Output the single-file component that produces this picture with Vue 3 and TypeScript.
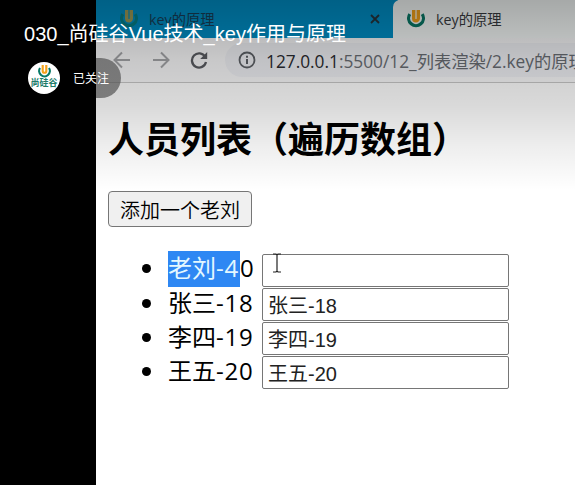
<script setup lang="ts">
import { ref } from 'vue'

interface Person {
  id: string
  name: string
  selected: string
  rest: string
  input: string
}

const people = ref<Person[]>([
  { id: '004', name: '老刘', selected: '-4', rest: '0', input: '' },
  { id: '001', name: '张三', selected: '', rest: '-18', input: '张三-18' },
  { id: '002', name: '李四', selected: '', rest: '-19', input: '李四-19' },
  { id: '003', name: '王五', selected: '', rest: '-20', input: '王五-20' },
])
</script>

<template>
  <div class="player">
    <div class="video">
      <div class="tabs">
        <div class="tab inactive">
          <svg class="favicon" viewBox="0 0 18 18">
            <path d="M2.8 4.2A7.4 7.4 0 1 0 15.2 4.2" fill="none" stroke="#087a68" stroke-width="3.2" />
            <path d="M6.7 0v8.4a2.3 2.3 0 0 0 4.6 0V0" fill="none" stroke="#f5a31c" stroke-width="3.4" />
          </svg>
          <span class="tab-title">key的原理</span>
          <svg class="close" viewBox="0 0 10 10"><path d="M1 1l8 8M9 1L1 9" stroke="#26343c" stroke-width="1.8" /></svg>
        </div>
        <div class="tab active">
          <svg class="favicon" viewBox="0 0 18 18">
            <path d="M2.8 4.2A7.4 7.4 0 1 0 15.2 4.2" fill="none" stroke="#087a68" stroke-width="3.2" />
            <path d="M6.7 0v8.4a2.3 2.3 0 0 0 4.6 0V0" fill="none" stroke="#f5a31c" stroke-width="3.4" />
          </svg>
          <span class="tab-title">key的原理</span>
        </div>
      </div>
      <div class="toolbar">
        <svg class="nav" viewBox="0 0 18 18"><path d="M17 9H2M9 1.5L1.5 9 9 16.5" fill="none" stroke="#a5a6a9" stroke-width="2" /></svg>
        <svg class="nav" viewBox="0 0 18 18"><path d="M1 9h15M9 1.5L16.5 9 9 16.5" fill="none" stroke="#a5a6a9" stroke-width="2" /></svg>
        <svg class="nav reload" viewBox="0 0 18 18">
          <path d="M15.2 5.8A7.1 7.1 0 1 0 16 11" fill="none" stroke="#5b5d62" stroke-width="2.3" />
          <path d="M17.2 1v7h-7z" fill="#5b5d62" />
        </svg>
        <div class="address">
          <svg class="info" viewBox="0 0 18 18">
            <circle cx="9" cy="9" r="7.5" fill="none" stroke="#5f6368" stroke-width="1.8" />
            <path d="M9 8v5M9 4.8v2" stroke="#5f6368" stroke-width="2" />
          </svg>
          <span class="url"><b>127.0.0.1</b><span class="port">:5500/12_</span><span class="path">列表渲染/2.key的原理</span></span>
        </div>
      </div>
      <main class="page">
        <h2>人员列表（遍历数组）</h2>
        <button type="button">添加一个老刘</button>
        <ul>
          <li v-for="p in people" :key="p.id">
            <span class="label"><span :class="{ marked: p.selected }">{{ p.name }}<span v-if="p.selected" class="num">{{ p.selected }}</span></span><span class="num">{{ p.rest }}</span></span>
            <input v-model="p.input" type="text" />
          </li>
        </ul>
      </main>
      <svg class="caret" viewBox="0 0 10 20"><path d="M1 1h3l1 1 1-1h3M5 2v16M1 19h3l1-1 1 1h3" fill="none" stroke="#222" stroke-width="1.2" /></svg>
    </div>
    <div class="shade"></div>
    <header class="overlay">
      <div class="title">030_尚硅谷Vue技术_key作用与原理</div>
      <div class="follow">
        <div class="avatar">
          <svg class="avatar-logo" viewBox="0 0 18 18">
            <path d="M2.8 4.2A7.4 7.4 0 1 0 15.2 4.2" fill="none" stroke="#087a68" stroke-width="3" />
            <path d="M6.5 0v8.2a2.5 2.5 0 0 0 5 0V0" fill="none" stroke="#f5a31c" stroke-width="3" />
          </svg>
          <span class="brand">尚硅谷</span>
        </div>
        <span>已关注</span>
      </div>
    </header>
  </div>
</template>

<style>
body {
  overflow: hidden;
}
</style>

<style scoped>
.player {
  position: relative;
  box-sizing: border-box;
  width: 575px;
  height: 485px;
  padding-left: 96px;
  overflow: hidden;
  background: #000;
  font-family: "Open Sans", "Noto Sans CJK SC", sans-serif;
}
.video {
  position: relative;
  width: 479px;
  height: 485px;
  overflow: hidden;
  background: #fff;
}
.tabs {
  display: flex;
  height: 38px;
  background: linear-gradient(90deg, #fafafb 50%, #0090c8 50%, #0090c8 63%, #f8fcfb 63%);
}
.tab {
  display: flex;
  align-items: center;
  box-sizing: border-box;
  height: 38px;
  padding-bottom: 1px;
  font-size: 14.3px;
  color: #383b40;
}
.inactive {
  width: 297px;
  padding-right: 13px;
  padding-left: 24px;
  background: #0090c8;
  color: #173f58;
}
.active {
  flex: 1;
  padding-left: 14px;
  background: #f8fcfb;
  border-top-left-radius: 7px;
}
.favicon {
  width: 18px;
  height: 18px;
  margin-right: 11px;
}
.inactive .favicon {
  opacity: .65;
}
.tab-title {
  white-space: nowrap;
}
.close {
  width: 10px;
  height: 10px;
  margin-left: auto;
}
.toolbar {
  display: flex;
  align-items: center;
  gap: 21px;
  box-sizing: border-box;
  height: 45px;
  padding-left: 17px;
  background: #fafafb;
  border-bottom: 1px solid #c9c9c9;
}
.nav {
  flex: none;
  width: 18px;
  height: 18px;
}
.reload {
  margin-left: -1px;
}
.address {
  display: flex;
  flex: 1;
  align-items: center;
  gap: 10px;
  height: 34px;
  margin-left: -4px;
  padding-left: 13px;
  overflow: hidden;
  background: #f1f2f6;
  border-radius: 17px 0 0 17px;
}
.info {
  flex: none;
  width: 18px;
  height: 18px;
}
.url {
  font-size: 17.3px;
  color: #6a6e74;
  white-space: nowrap;
}
.url b {
  font-weight: 400;
  color: #292b30;
}
.page {
  padding: 27px 12px 0;
  color: #000;
}
h2 {
  height: 54px;
  margin: 0 0 27px;
  font: 700 36px/54px "Noto Sans CJK SC", sans-serif;
  white-space: nowrap;
}
button {
  display: block;
  box-sizing: border-box;
  width: 144px;
  height: 36px;
  padding: 1px 0 0;
  background: #f0f0f0;
  border: 1px solid #767676;
  border-radius: 4px;
  font: 350 20px/32px "Noto Sans CJK SC", sans-serif;
  color: #000;
}
ul {
  display: grid;
  grid-template-rows: 36px 34px 34px 34px;
  margin: 24px 0 0;
  padding: 0 0 0 34px;
  list-style: none;
}
li {
  display: flex;
  align-items: flex-end;
}
li::before {
  width: 9px;
  height: 9px;
  margin-right: 17px;
  margin-bottom: 14px;
  background: #000;
  border-radius: 50%;
  content: "";
}
li:nth-child(n + 2)::before {
  margin-bottom: 13px;
}
.label {
  display: flex;
  width: 94px;
  height: 36px;
  font-size: 24px;
  line-height: 36px;
  white-space: nowrap;
}
li:first-child .label {
  line-height: 34px;
}
.num {
  letter-spacing: .8px;
}
.marked {
  box-sizing: border-box;
  width: 72px;
  height: 36px;
  overflow: hidden;
  background: #2e87f3;
  color: #e4f8ff;
}
.marked .num {
  letter-spacing: .8px;
}
input {
  box-sizing: border-box;
  width: 247px;
  height: 33px;
  padding: 0 5px;
  background: #fff;
  border: 1px solid #767676;
  border-radius: 2px;
  font: 20px "Liberation Sans", "Noto Sans CJK SC", sans-serif;
  color: #222;
}
.caret {
  position: absolute;
  top: 253px;
  left: 176px;
  width: 10px;
  height: 20px;
}
.shade {
  position: absolute;
  inset: 0 0 auto;
  height: 190px;
  background: linear-gradient(rgba(0, 0, 0, .33) 0, rgba(0, 0, 0, .2) 60px, rgba(0, 0, 0, .15) 105px, rgba(0, 0, 0, .07) 145px, transparent 190px);
}
.overlay {
  position: absolute;
  top: 21px;
  left: 24px;
  color: #fff;
}
.title {
  height: 26px;
  font: 20.05px/26px "Liberation Sans", "Noto Sans CJK SC", sans-serif;
  white-space: nowrap;
}
.follow {
  display: flex;
  align-items: center;
  gap: 13px;
  box-sizing: border-box;
  width: 97px;
  height: 40px;
  margin-top: 11px;
  padding-left: 4px;
  background: linear-gradient(90deg, #000 72px, rgba(80, 80, 80, .68) 72px);
  border-radius: 20px;
  font: 12px/18px "Noto Sans CJK SC", sans-serif;
}
.avatar {
  display: flex;
  flex-direction: column;
  align-items: center;
  box-sizing: border-box;
  width: 32px;
  height: 32px;
  padding-top: 3px;
  background: #fff;
  border-radius: 50%;
}
.avatar-logo {
  width: 13px;
  height: 13px;
}
.brand {
  font: 700 9px/10px "Noto Sans CJK SC", sans-serif;
  color: #207c69;
  white-space: nowrap;
}
</style>
